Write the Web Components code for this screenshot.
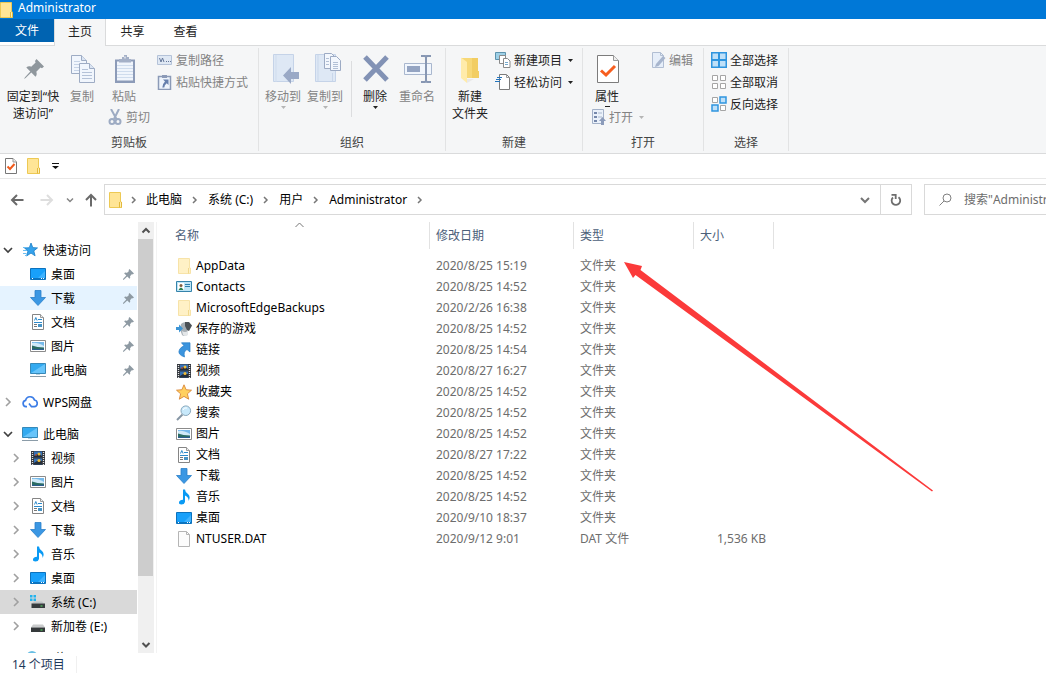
<!DOCTYPE html>
<html lang="zh-CN">
<head>
<meta charset="utf-8">
<meta name="viewport" content="width=device-width, initial-scale=1">
<title>Administrator</title>
<style>
html, body { height: 100%; margin: 0; }
body { overflow: hidden; background: #fff; color: #000; font: 12px/17px "Noto Sans", "Noto Sans CJK SC", sans-serif; }
</style>
</head>
<body>
<explorer-window></explorer-window>
<script>
const ICONS = {
  folder: [13, 16, '<path d="M.5.5h11v9.500h1v5.500H.5z" fill="#ffe596" stroke="#edc954"/><path d="M10.500 10v5.500M12.500 10v5.500" stroke="#e3b93c"/><path d="M11.500 10.500v4" stroke="#fff0b8"/>'],
  folderPale: [16, 16, '<path d="M2.500.5h11v9.500h1v5.500h-12z" fill="#fff1c6" stroke="#f7e3a8"/><path d="M12.500 10v5.500" stroke="#f1d98f"/>'],
  docCheck: [12, 16, '<path d="M.5.5h7.500l3.500 3.500v11.500H.5z" fill="#fff" stroke="#777"/><path d="M8 .5v3.500h3.500" fill="#eee" stroke="#999"/><path d="m2.500 8.500 2.500 2.500 4.500-5" fill="none" stroke="#f05a1c" stroke-width="2"/>'],
  pinBig: [22, 22, '<g fill="#8f979d"><path d="M13.500 1 21 8.500l-2 1.700-1.500-.7-4.200 4.300c.8 2 .4 3.700-.8 5L8.300 14.600 2.600 20 1 21l1-1.700 5.300-5.700-4-4.100c1.500-1.200 3-1.500 4.900-.7L12.600 4.500 12 3z"/></g>'],
  pin: [11, 11, '<path d="M6.500 0 11 4.500 9.500 5.500 9 5 7 7.200c.4 1.200.2 2-.5 2.600L4.300 7.600.8 10.800H0V10l3.300-3.600L1.100 4.300c.8-.8 1.600-.9 2.700-.4L6 2 5.500 1.300z" fill="#8e9aa3"/>'],
  copy: [26, 28, '<g transform="translate(1)" stroke="#9eacc4" fill="#f1f6fd"><path d="M.5.5h10l5 5v13H.5z"/><path d="M10.500.5v5h5" fill="#dbe5f3"/><path d="M3 6.500h6M3 9.500h8M3 12.500h8M3 15.500h8" stroke="#c6d3e6"/><path d="M8.500 8.500h10l5 5v14h-15z"/><path d="M18.500 8.500v5h5" fill="#dbe5f3"/><path d="M11 14.500h6M11 17.500h10M11 20.500h10M11 23.500h10" stroke="#b4c2d8"/></g>'],
  paste: [22, 30, '<path d="M1 5.500h20v23.500H1z" fill="#8c9bb8"/><path d="M3 7.500h16v19H3z" fill="#f0f5fc"/><path d="M3 11.500h16M3 14.500h16M3 17.500h16M3 20.500h16M3 23.500h16" stroke="#cfdced"/><path d="M5 5h3V3h2V1h3v2h2v2h2v3.500H5z" fill="#a4b0c7"/><path d="M11 2.500v2" stroke="#fff"/>'],
  cut: [16, 16, '<g fill="none" stroke="#9dabc3"><path d="m4 0 6 11M12 0 7 10" stroke-width="2"/><circle cx="5" cy="12.500" r="2.500" stroke-width="2"/><circle cx="11" cy="12.500" r="2.500" stroke-width="2"/></g>'],
  path: [16, 16, '<path d="M.5 3.500h14v9H.5z" fill="#dfe8f4" stroke="#b4c2d8"/><path d="m2.500 6 1.500 4 1.500-4 1.500 4M9 9.500h1M11 9.500h1M13 9.500h1" fill="none" stroke="#66789a"/>'],
  shortcut: [16, 16, '<path d="M1.500 2.500h12v13h-12z" fill="#eef4fc" stroke="#8b9ab7" stroke-width="1.500"/><path d="M5 1h5v3H5z" fill="#8b9ab7"/><path d="M6 5.500h5.500V11L9.700 9.300Q7.300 11 7.300 13.500h-2q0-3.500 2.700-6z" fill="#6680ad"/>'],
  move: [32, 32, '<g transform="translate(2)"><path d="M3.500 1.500h20v27h-20z" fill="#dee8f5" stroke="#c5d3e8"/><path d="M6 2v27" stroke="#cfdced"/><path d="M13 22.500 21 14v5h8v7h-8v5z" fill="#9aa9c6"/></g>'],
  copyTo: [32, 32, '<g transform="translate(2)"><path d="M3.500 1.500h20v27h-20z" fill="#dee8f5" stroke="#c5d3e8"/><path d="M6 2v26M20.500 20v8" stroke="#c9d7ea"/><g fill="#f3f7fd" stroke="#9dabc4"><path d="M12.500.5h7l3 3v12h-10z"/><path d="M18.500 3.500h6l4 4v10h-10z"/><path d="M21 9.500h5M21 11.500h5M21 13.500h5M21 15.500h5M14 5.500h3M14 8.500h3M14 11.500h3" stroke="#b2c0d6"/></g></g>'],
  remove: [28, 28, '<path d="m3 2 22 23M25 2 3 25" stroke="#8292b5" stroke-width="5"/>'],
  rename: [28, 28, '<path d="M.5 8.500h27v11H.5z" fill="#f1f6fd" stroke="#a9b7ce"/><path d="M3 11h13v6H3z" fill="#94a4c2"/><path d="M17 1h4l1 1 1-1h4M22 2v24M17 27h4l1-1 1 1h4" fill="none" stroke="#8797b3" stroke-width="2"/>'],
  newFolder: [22, 30, '<path d="M1 4h17v20H7z" fill="#f7d877"/><path d="M12 4h6v13h1v7h-7z" fill="#f2cd62"/><path d="M1 3.500 7 8v21L1 24z" fill="#ffebaa"/><path d="M7 25h7l-7 4z" fill="#e9e9e9"/>'],
  newItem: [16, 16, '<path d="M.5.5h10v7H.5z" fill="#9ed0e7" stroke="#5d93ad"/><g fill="#fff" stroke="#8a8a8a"><path d="M4.500 3.500h6v8h-6z"/><path d="M8.500 6.500h4l2.500 2.500v6.500H8.500z"/><path d="M10 10.500h3M10 12.500h3" stroke="#76a9cc"/></g>'],
  easy: [16, 16, '<path d="M4.500.5h7l3 3v12h-10z" fill="#fff" stroke="#7b7b7b"/><path d="M11.500.5v3h3" fill="none" stroke="#999"/><path d="M2 3.500h5M1 5.500h5M0 7.500h5" stroke="#2475bd"/>'],
  properties: [22, 28, '<path d="M.5.5h16l5 5v22H.5z" fill="#fff" stroke="#7c7c7c"/><path d="M16.500.5v5h5" fill="#eee" stroke="#999"/><path d="m4 15.500 5 4.500 9-9" fill="none" stroke="#f75e1f" stroke-width="3"/>'],
  open: [16, 16, '<path d="M2.500.5h11v14h-11z" fill="#eaf1fa" stroke="#a3b1c8"/><path d="M4 3h3v2H4zM4 7h3v2H4zM4 11h3v2H4z" fill="#7688ab"/><path d="M8 4h4M8 8h4" stroke="#aab8ce"/><path d="m12.500 8 3.500 4h-2v4h-3v-4H9z" fill="#8b9bba"/>'],
  edit: [16, 16, '<path d="M2.500.5h8l3 3v12h-11z" fill="#e6eef9" stroke="#b1bed3"/><path d="M10.500.5v3h3" fill="none" stroke="#b1bed3"/><path d="m13 4 2.500 2-7 8-3.500 1 1-3z" fill="#a7b5cd"/>'],
  selectAll: [16, 16, '<path d="M0 0h16v16H0z" fill="#2f95df"/><path d="M1.500 1.500h5.500v5.500H1.500zM9 1.500h5.500v5.500H9zM1.500 9h5.500v5.500H1.500zM9 9h5.500v5.500H9z" fill="#bfe0f8"/>'],
  selectNone: [16, 16, '<path d="M1.500 1.500h5v5h-5zM9.500 1.500h5v5h-5zM1.500 9.500h5v5h-5zM9.500 9.500h5v5h-5z" fill="#fff" stroke="#a5a5a5"/>'],
  invert: [16, 16, '<path d="M1.500 1.500h5v5h-5zM9.500 9.500h5v5h-5z" fill="#fff" stroke="#a5a5a5"/><path d="M9 1h6v6H9zM1 9h6v6H1z" fill="#bfe0f8" stroke="#2f95df" stroke-width="1.500"/>'],
  back: [14, 14, '<path d="M13.500 7H2M7 2 2 7l5 5" fill="none" stroke="#6a6a6a" stroke-width="2"/>'],
  forward: [14, 14, '<path d="M.5 7H12M7 2l5 5-5 5" fill="none" stroke="#dedede" stroke-width="2"/>'],
  up: [14, 14, '<path d="M7 13.500V2M2 7l5-5 5 5" fill="none" stroke="#6a6a6a" stroke-width="2"/>'],
  chevDown: [10, 10, '<path d="m1 3 4 4 4-4" fill="none" stroke="#757575" stroke-width="2"/>'],
  chevSmall: [8, 8, '<path d="m1 2.500 3 3 3-3" fill="none" stroke="#858585" stroke-width="1.500"/>'],
  chevRight: [6, 8, '<path d="m1 1 3 3-3 3" fill="none" stroke="#777" stroke-width="1.500"/>'],
  treeOpen: [10, 10, '<path d="m1 3 4 4 4-4" fill="none" stroke="#404040" stroke-width="1.700"/>'],
  treeClosed: [10, 10, '<path d="m3 1 4 4-4 4" fill="none" stroke="#a0a0a0" stroke-width="1.600"/>'],
  scrollUp: [10, 10, '<path d="m1.500 6.500 3.500-3.500 3.500 3.500" fill="none" stroke="#505050" stroke-width="2"/>'],
  scrollDown: [10, 10, '<path d="m1.500 3 3.500 3.500 3.500-3.500" fill="none" stroke="#505050" stroke-width="2"/>'],
  sort: [9, 6, '<path d="m.5 5 4-4 4 4" fill="none" stroke="#777"/>'],
  refresh: [12, 14, '<path d="M8.500 4.200a4.300 4.300 0 1 1-5.500.3" fill="none" stroke="#6e6e6e" stroke-width="1.800"/><path d="M1.500 1.800h4.200V6" fill="none" stroke="#6e6e6e" stroke-width="1.800"/>'],
  lens: [13, 13, '<circle cx="8" cy="5" r="4" fill="none" stroke="#808080"/><path d="M5 8 .5 12.500" stroke="#808080"/>'],
  customize: [7, 6, '<path d="M0 .5h7" stroke="#111"/><path d="M0 3h7L3.500 6z" fill="#111"/>'],
  arrow: [5, 3, '<path d="M0 0h5L2.500 3z" fill="currentColor"/>'],
  dash: [5, 1, '<path d="M0 0h5v1H0z" fill="#222"/>'],
  quick: [16, 16, '<path d="m9 1 1.800 4.600 4.700.3-3.700 3 1.300 4.900L9 11.100 4.500 14l1.500-5L2.500 6l4.800-.3z" fill="#35a2ec" stroke="#1c7fc6" stroke-width=".8"/><path d="M1 5.500h4M1 8.500h4M1 11.500h3.500M3 13.500h2" stroke="#6abdf2"/>'],
  desktop: [16, 16, '<path d="M.5 2.500h15v11H.5z" fill="#18a0fa" stroke="#0c72bd"/><path d="M8 12 15 5v7z" fill="#3fb3ff"/><path d="M1 12.500h14" stroke="#0c76c2"/><path d="M2 12.500h1M11 12.500h1M13 12.500h1" stroke="#fff"/>'],
  download: [16, 16, '<path d="M5 .5h6v7h4.500L8 15.500.5 7.500H5z" fill="#3b97e3" stroke="#2a7fc9" stroke-width=".8"/>'],
  document: [16, 16, '<path d="M2.500.5h8l3 3v12h-11z" fill="#fff" stroke="#858585"/><path d="M10.500.5v3h3" fill="#eee" stroke="#999"/><path d="m4.500 6.500 1.300-3 1.300 3" stroke="#2d8acb" fill="none"/><path d="M8 5.500h4M4 8.500h8" stroke="#2d8acb"/><path d="M4 10.500h3M4 12.500h3" stroke="#777"/><path d="M8 10h4v3H8z" fill="#4793c5"/>'],
  picture: [16, 16, '<path d="M.5 2.500h15v11H.5z" fill="#fff" stroke="#8b8b8b"/><path d="M2 4h12v8H2z" fill="#75b9ea"/><path d="M2 5q5-1 12 3v4H2z" fill="#cfe9f8"/><path d="M2 7.500q5 2 12 2V12H2z" fill="#2b6d63"/><path d="M2 10.500q5 1 12 0V12H2z" fill="#2c5d8f"/>'],
  pc: [16, 16, '<path d="M.5 1.500h15v10H.5z" fill="#33aaf0" stroke="#3689b9"/><path d="M1 11 15 2v9z" fill="#67c4fa"/><path d="M6 12h4v1H6z" fill="#b8d2e0"/><path d="M0 14.500h16" stroke="#8b9ca8"/>'],
  cloud: [16, 16, '<path d="M5 12.700H4a3.200 3.200 0 0 1-.4-6.300A4.600 4.600 0 0 1 12.500 6a3.400 3.400 0 0 1-.2 6.700H9.500L7 9.500" fill="none" stroke="#3c7de6" stroke-width="1.700"/>'],
  video: [16, 16, '<path d="M1 1h14v14H1z" fill="#34383f"/><path d="M2.500 2v13M13.500 2v13" stroke="#e4e4e4" stroke-width="1.300" stroke-dasharray="1 1"/><path d="M4 1.500h8v6H4zM4 8.500h8v6H4z" fill="#3672b8"/><path d="M4 6q4-4 8 0v1.500H4zM4 13q3-3 8-2v3.500H4z" fill="#262f3a"/><circle cx="9" cy="4" r="1.500" fill="#f1be36"/><circle cx="9" cy="10.500" r="1.500" fill="#f1be36"/><path d="M5 5h2" stroke="#e05a43"/>'],
  music: [16, 16, '<path d="M7 .5h2q0 2.500 3 4.500 3 3 .5 7 .5-4-3.500-5.500V13q-.7 2.500-3.500 2.500T3 13.300Q3.400 11 7 10.700z" fill="#0a9af4"/>'],
  systemDrive: [16, 16, '<path d="M0 1h2.500v2.500H0zM3.500 1H6v2.500H3.500zM0 4.500h2.500V7H0zM3.500 4.500H6V7H3.500z" fill="#22b3ee"/><path d="m3 8.500 1.500-1H12l2 2H1.500z" fill="#bfc3c6"/><path d="M1.500 9.500H15V14H1.500z" fill="#373b3e"/><path d="M10.500 12h2" stroke="#58e466"/>'],
  drive: [16, 16, '<path d="m1 9.500 2-3h10l2 3z" fill="#c9cbcc"/><path d="M1 9.500h14V14H1z" fill="#35393b"/><path d="M10.500 12h2" stroke="#58e466"/>'],
  network: [16, 16, '<circle cx="10" cy="6.500" r="5.500" fill="#69bfe4"/><path d="M7 4q3-2 5 1l-3 4z" fill="#3488b9"/><path d="M0 8h10v6H0z" fill="#38a6e8"/>'],
  contacts: [16, 16, '<path d="M.5 2.500h15v10H.5z" fill="#bde4f5" stroke="#3583ab"/><path d="M2 4h6v7H2z" fill="#fff"/><circle cx="5" cy="6.500" r="1.500" fill="#805e40"/><path d="M2.500 11q2.500-5 5 0z" fill="#2c8050"/><path d="M9 5.500h5M9 7.500h5" stroke="#2e7fad"/>'],
  games: [16, 16, '<path d="M5 3q3-3 6-1l1 4-1 8q-3 2-5 0L4 8z" fill="#a6aeb4"/><path d="M9 1h4l3 3.500-3 5.500-2-1-2-4z" fill="#4b5156"/><path d="M0 6h3V3.500l4 4-4 4V9H0z" fill="#3d95d5"/><path d="M6 10q3 2 6 0v4q-3 2-5 0z" fill="#e4e7e9"/>'],
  link: [16, 16, '<path d="M5.500.8H14V10l-3-2.500q-4 2-2.500 7.500Q1 12.500 3.500 7.500 5 5 8 3.800z" fill="#3b94de" stroke="#267dc6" stroke-width=".7"/>'],
  star: [16, 16, '<path d="m8 .8 2.100 4.900 5.400.5-4.100 3.600 1.300 5.400L8 12.400l-4.700 2.800 1.300-5.400L.5 6.200l5.400-.5z" fill="#ffd05f" stroke="#d9873a" stroke-width=".9"/>'],
  search: [16, 16, '<path d="M6.500 9.500 1 15" stroke="#8696a5" stroke-width="2"/><circle cx="9.800" cy="5.700" r="4.800" fill="#c8e9fb" stroke="#89a8bc"/><path d="M7 5q1-3 4-2" fill="none" stroke="#fff"/>'],
  file: [16, 16, '<path d="M2.500.5h8l3 3v12h-11z" fill="#fcfcfc" stroke="#b5b5b5"/><path d="M10.500.5v3h3" fill="none" stroke="#b5b5b5"/>']
};

const RESET = `
  *, ::before, ::after { box-sizing: border-box; }
  button { margin: 0; padding: 0; border: 0; background: none; font: inherit; color: inherit; }
  a { color: inherit; text-decoration: none; }
  ul, ol { margin: 0; padding: 0; list-style: none; }`;

class Base extends HTMLElement {
  connectedCallback() {
    if (this.shadowRoot) return;
    this.attachShadow({ mode: 'open' }).innerHTML =
      `<style>${RESET}${this.css()}</style>${this.html()}`;
  }
}
const icon = name => `<ui-icon name="${name}"></ui-icon>`;

customElements.define('ui-icon', class extends Base {
  css() { return ':host { display: block; flex: none; } svg { display: block; }'; }
  html() {
    const [w, h, body] = ICONS[this.getAttribute('name')];
    return `<svg width="${w}" height="${h}" viewBox="0 0 ${w} ${h}" aria-hidden="true">${body}</svg>`;
  }
});

customElements.define('title-bar', class extends Base {
  css() { return `
    :host { display: flex; align-items: center; gap: 5px; height: 19px; flex: none; background: #0078d7; color: #fff; overflow: hidden; }
    span { padding-bottom: 4px; }`; }
  html() { return `${icon('folder')}<span><slot></slot></span>`; }
});

customElements.define('ribbon-tabs', class extends Base {
  css() { return `
    :host { display: flex; height: 27px; flex: none; border-bottom: 1px solid #dadbdc; }
    button { width: 53px; height: 24px; color: #222; }
    .file { width: 54px; height: 23px; background: #0063b1; color: #fff; }
    .active { width: 52px; height: 27px; padding-bottom: 2px; background: #f5f6f7; border: 1px solid #dadbdc; border-width: 0 1px; }`; }
  html() { return `<button class="file">文件</button><button class="active">主页</button><button>共享</button><button>查看</button>`; }
});

customElements.define('ribbon-group', class extends Base {
  css() { return `
    :host { display: flex; flex-direction: column; flex: none; height: 103px; border-right: 1px solid #e2e3e4; }
    .items { display: flex; flex: 1; }
    .label { height: 17px; text-align: center; color: #444; }`; }
  html() { return `<div class="items"><slot></slot></div><div class="label">${this.getAttribute('label')}</div>`; }
});

customElements.define('ribbon-large', class extends Base {
  css() { return `
    :host { display: block; flex: none; color: #222; }
    :host([disabled]) { color: #838383; }
    button { display: flex; flex-direction: column; align-items: center; width: 100%; white-space: nowrap; }
    .pic { display: flex; align-items: center; justify-content: center; height: 39px; padding-left: 2px; }
    .more { padding-top: 1px; }
    :host([disabled]) .more { color: #b5b5b5; }`; }
  html() {
    const more = this.getAttribute('more');
    return `<button ${this.hasAttribute('disabled') ? 'disabled' : ''}><span class="pic">${icon(this.getAttribute('icon'))}</span><span><slot></slot></span>${more ? `<span class="more">${icon(more)}</span>` : ''}</button>`;
  }
});

customElements.define('ribbon-small', class extends Base {
  css() { return `
    :host { display: block; flex: none; color: #222; }
    :host([disabled]) { color: #838383; }
    button { display: flex; align-items: center; gap: 3px; height: 22px; white-space: nowrap; }
    .more { padding-left: 3px; }
    :host([disabled]) .more { color: #b5b5b5; }`; }
  html() {
    return `<button ${this.hasAttribute('disabled') ? 'disabled' : ''}>${icon(this.getAttribute('icon'))}<span><slot></slot></span>${this.hasAttribute('more') ? `<span class="more">${icon('arrow')}</span>` : ''}</button>`;
  }
});

customElements.define('home-ribbon', class extends Base {
  css() { return `
    :host { display: flex; height: 108px; flex: none; padding-top: 2px; background: #f5f6f7; border-bottom: 1px solid #dadbdc; }
    ribbon-group { padding-top: 1px; }
    .col { display: flex; flex-direction: column; }
    .stack { height: 57px; }
    .w30 { width: 30px; } .w32 { width: 32px; } .w38 { width: 38px; } .w42 { width: 42px; }
    .w46 { width: 46px; } .w52 { width: 52px; } .w66 { width: 66px; }
    .clip { padding: 0 10px 0 7px; }
    .end { align-self: flex-end; }
    .org { display: flex; padding: 0 5px 0 3px; }
    .rule { width: 1px; height: 56px; margin: 12px 4px 0 5px; background: #dcdddf; }
    .new { display: flex; padding: 0 9px 0 1px; }
    .new .col { padding-left: 2px; }
    .open { display: flex; padding: 0 10px 0 7px; }
    .open .w60 { width: 60px; }
    .open .w30 { margin-left: 2px; }
    .select { padding: 0 10px 0 7px; }`; }
  html() { return `
    <ribbon-group label="剪贴板">
      <ribbon-large class="w66" icon="pinBig">固定到“快<br>速访问”</ribbon-large>
      <ribbon-large class="w32" icon="copy" disabled>复制</ribbon-large>
      <div class="col w52"><ribbon-large class="stack" icon="paste" disabled>粘贴</ribbon-large><ribbon-small class="end" icon="cut" disabled>剪切</ribbon-small></div>
      <div class="col clip"><ribbon-small icon="path" disabled>复制路径</ribbon-small><ribbon-small icon="shortcut" disabled>粘贴快捷方式</ribbon-small></div>
    </ribbon-group>
    <ribbon-group label="组织"><div class="org">
      <ribbon-large class="w42" icon="move" more="arrow" disabled>移动到</ribbon-large>
      <ribbon-large class="w42" icon="copyTo" more="arrow" disabled>复制到</ribbon-large>
      <div class="rule"></div>
      <ribbon-large class="w38" icon="remove" more="arrow">删除</ribbon-large>
      <ribbon-large class="w46" icon="rename" disabled>重命名</ribbon-large></div>
    </ribbon-group>
    <ribbon-group label="新建"><div class="new">
      <ribbon-large class="w46" icon="newFolder">新建<br>文件夹</ribbon-large>
      <div class="col"><ribbon-small icon="newItem" more>新建项目</ribbon-small><ribbon-small icon="easy" more>轻松访问</ribbon-small></div></div>
    </ribbon-group>
    <ribbon-group label="打开"><div class="open">
      <div class="col w60"><ribbon-large class="stack w30" icon="properties" more="dash">属性</ribbon-large><ribbon-small icon="open" more disabled>打开</ribbon-small></div>
      <ribbon-small icon="edit" disabled>编辑</ribbon-small></div>
    </ribbon-group>
    <ribbon-group label="选择">
      <div class="col select"><ribbon-small icon="selectAll">全部选择</ribbon-small><ribbon-small icon="selectNone">全部取消</ribbon-small><ribbon-small icon="invert">反向选择</ribbon-small></div>
    </ribbon-group>`; }
});

customElements.define('quick-bar', class extends Base {
  css() { return `
    :host { display: flex; align-items: center; gap: 10px; height: 25px; flex: none; padding-left: 5px; border-bottom: 1px solid #e8e8e8; }
    button:last-child { padding: 2px; }`; }
  html() { return `<button aria-label="属性">${icon('docCheck')}</button><button aria-label="新建文件夹">${icon('folder')}</button><button aria-label="自定义快速访问工具栏">${icon('customize')}</button>`; }
});

customElements.define('address-bar', class extends Base {
  css() { return `
    :host { display: flex; flex: none; padding-top: 5px; height: 43px; align-items: flex-start; overflow: hidden; }
    .nav { display: flex; align-items: center; height: 31px; width: 104px; padding-left: 10px; flex: none; }
    .fwd { margin-left: 16px; } .recent { margin: 0 10px 0 12px; }
    .box { display: flex; align-items: center; flex: 1; height: 31px; border: 1px solid #d9d9d9; padding-left: 4px; }
    ol { display: flex; flex: 1; }
    li { display: flex; align-items: center; white-space: nowrap; }
    li ui-icon { padding: 0 10px; }
    li:first-child ui-icon { padding: 0 9px; }
    .box > button { display: flex; align-items: center; justify-content: center; width: 30px; height: 29px; }
    .box > .refresh { width: 31px; border-left: 1px solid #d9d9d9; }
    .search { display: flex; align-items: center; gap: 12px; flex: none; width: 180px; height: 31px; margin: 0 -58px 0 12px; padding-left: 14px; border: 1px solid #d9d9d9; }
    input { flex: 1; min-width: 0; height: 17px; border: 0; padding: 0; outline: 0; background: none; font: inherit; }
    input::placeholder { color: #6d6d6d; opacity: 1; }`; }
  html() {
    const parts = ['此电脑', '系统 (C:)', '用户', 'Administrator'];
    return `<div class="nav"><button aria-label="后退">${icon('back')}</button><button class="fwd" aria-label="前进">${icon('forward')}</button><button class="recent" aria-label="最近">${icon('chevSmall')}</button><button aria-label="上移">${icon('up')}</button></div>
      <div class="box">${icon('folder')}<ol><li>${icon('chevRight')}</li>${parts.map(p => `<li><a href="#">${p}</a>${icon('chevRight')}</li>`).join('')}</ol>
      <button aria-label="历史">${icon('chevDown')}</button><button class="refresh" aria-label="刷新">${icon('refresh')}</button></div>
      <label class="search">${icon('lens')}<input type="text" aria-label="搜索" placeholder='搜索"Administrator"'></label>`;
  }
});

customElements.define('tree-item', class extends Base {
  css() { return `
    :host { display: flex; align-items: center; height: 24px; padding: 0 3px; }
    :host([level="1"]) { padding-left: 11px; }
    :host([hover]) { background: #e5f3ff; }
    :host([selected]) { background: #d9d9d9; }
    .toggle { width: 19px; height: 24px; }
    a { display: flex; align-items: center; gap: 5px; flex: 1; white-space: nowrap; }`; }
  html() {
    const toggle = this.getAttribute('toggle');
    return `<span class="toggle">${toggle ? `<button class="toggle" aria-label="展开">${icon(toggle)}</button>` : ''}</span><a href="#">${icon(this.getAttribute('icon'))}<slot></slot></a>${this.hasAttribute('pinned') ? icon('pin') : ''}`;
  }
});

customElements.define('nav-pane', class extends Base {
  css() { return `
    :host { display: flex; flex: none; width: 157px; overflow: hidden; border-right: 1px solid #f3f3f3; }
    nav { display: flex; flex-direction: column; gap: 8px; width: 137px; margin-right: 1px; padding-top: 16px; }
    .bar { display: flex; flex-direction: column; width: 16px; background: #f0f0f0; }
    .bar button { display: flex; align-items: center; justify-content: center; height: 17px; flex: none; }
    .track { flex: 1; padding-right: 1px; }
    .thumb { height: 85%; background: #cdcdcd; }`; }
  html() {
    const item = (label, pic, extra = '') => `<tree-item icon="${pic}" ${extra}>${label}</tree-item>`;
    const pinned = [['桌面', 'desktop'], ['下载', 'download', 'hover'], ['文档', 'document'], ['图片', 'picture'], ['此电脑', 'pc']];
    const own = [['视频', 'video'], ['图片', 'picture'], ['文档', 'document'], ['下载', 'download'], ['音乐', 'music'], ['桌面', 'desktop'], ['系统 (C:)', 'systemDrive', 'selected'], ['新加卷 (E:)', 'drive']];
    return `<nav>
      <div>${item('快速访问', 'quick', 'toggle="treeOpen"')}${pinned.map(([l, i, x = '']) => item(l, i, `level="1" pinned ${x}`)).join('')}</div>
      <div>${item('WPS网盘', 'cloud', 'toggle="treeClosed"')}</div>
      <div>${item('此电脑', 'pc', 'toggle="treeOpen"')}${own.map(([l, i, x = '']) => item(l, i, `level="1" toggle="treeClosed" ${x}`)).join('')}</div>
      <div>${item('网络', 'network')}</div></nav>
      <div class="bar"><button aria-label="向上滚动">${icon('scrollUp')}</button><div class="track"><div class="thumb"></div></div><button aria-label="向下滚动">${icon('scrollDown')}</button></div>`;
  }
});

customElements.define('file-list', class extends Base {
  css() { return `
    :host { display: block; flex: 1; min-width: 0; }
    table { table-layout: fixed; width: 617px; border-collapse: separate; border-spacing: 0; color: #6d6d6d; }
    th { position: relative; height: 27px; padding: 0 0 0 6px; border-right: 1px solid #e2e2e2; text-align: left; font-weight: 400; color: #4c607a; }
    th:first-child { padding-left: 18px; }
    th ui-icon { position: absolute; top: 0; left: 138px; }
    .name { width: 273px; } .date { width: 144px; } .type { width: 120px; }
    td { height: 21px; padding: 0 0 0 6px; white-space: nowrap; }
    td:first-child { padding-left: 19px; color: #000; }
    td:last-child { padding: 0 8px 0 0; text-align: right; }
    tbody::before { content: ""; display: block; height: 6px; }
    a { display: flex; align-items: center; gap: 4px; }`; }
  html() {
    const rows = [
      ['folderPale', 'AppData', '2020/8/25 15:19'], ['contacts', 'Contacts', '2020/8/25 14:52'],
      ['folderPale', 'MicrosoftEdgeBackups', '2020/2/26 16:38'], ['games', '保存的游戏', '2020/8/25 14:52'],
      ['link', '链接', '2020/8/25 14:54'], ['video', '视频', '2020/8/27 16:27'],
      ['star', '收藏夹', '2020/8/25 14:52'], ['search', '搜索', '2020/8/25 14:52'],
      ['picture', '图片', '2020/8/25 14:52'], ['document', '文档', '2020/8/27 17:22'],
      ['download', '下载', '2020/8/25 14:52'], ['music', '音乐', '2020/8/25 14:52'],
      ['desktop', '桌面', '2020/9/10 18:37'], ['file', 'NTUSER.DAT', '2020/9/12 9:01', 'DAT 文件', '1,536 KB']];
    return `<table><thead><tr><th class="name">名称${icon('sort')}</th><th class="date">修改日期</th><th class="type">类型</th><th>大小</th></tr></thead>
      <tbody>${rows.map(([i, n, d, t = '文件夹', s = '']) => `<tr><td><a href="#">${icon(i)}${n}</a></td><td>${d}</td><td>${t}</td><td>${s}</td></tr>`).join('')}</tbody></table>`;
  }
});

/* Red pointer laid over the list, aimed at the first row's type. */
customElements.define('pointer-mark', class extends Base {
  css() { return ':host { position: absolute; top: 40px; left: 624px; pointer-events: none; } svg { display: block; }'; }
  html() { return '<svg width="312" height="232" viewBox="0 0 312 232" aria-hidden="true"><path d="M0 0 18 4 16.500 8 309 228.500 308 229.500 11.500 13 9 16z" fill="#fb3a3a"/></svg>'; }
});

customElements.define('status-bar', class extends Base {
  css() { return `
    :host { display: flex; align-items: center; height: 23px; flex: none; padding-left: 12px; color: #1e395b; }
    span { padding-right: 11px; border-right: 1px solid #f0f0f0; }`; }
  html() { return '<span><slot></slot></span>'; }
});

customElements.define('explorer-window', class extends Base {
  css() { return `
    :host { display: flex; flex-direction: column; height: 100%; overflow: hidden; }
    main { position: relative; display: flex; flex: 1; min-height: 0; }`; }
  html() { return `<title-bar>Administrator</title-bar><ribbon-tabs></ribbon-tabs><home-ribbon></home-ribbon>
    <quick-bar></quick-bar><address-bar></address-bar>
    <main><nav-pane></nav-pane><file-list></file-list><pointer-mark></pointer-mark></main>
    <status-bar>14 个项目</status-bar>`; }
});
</script>
</body>
</html>
